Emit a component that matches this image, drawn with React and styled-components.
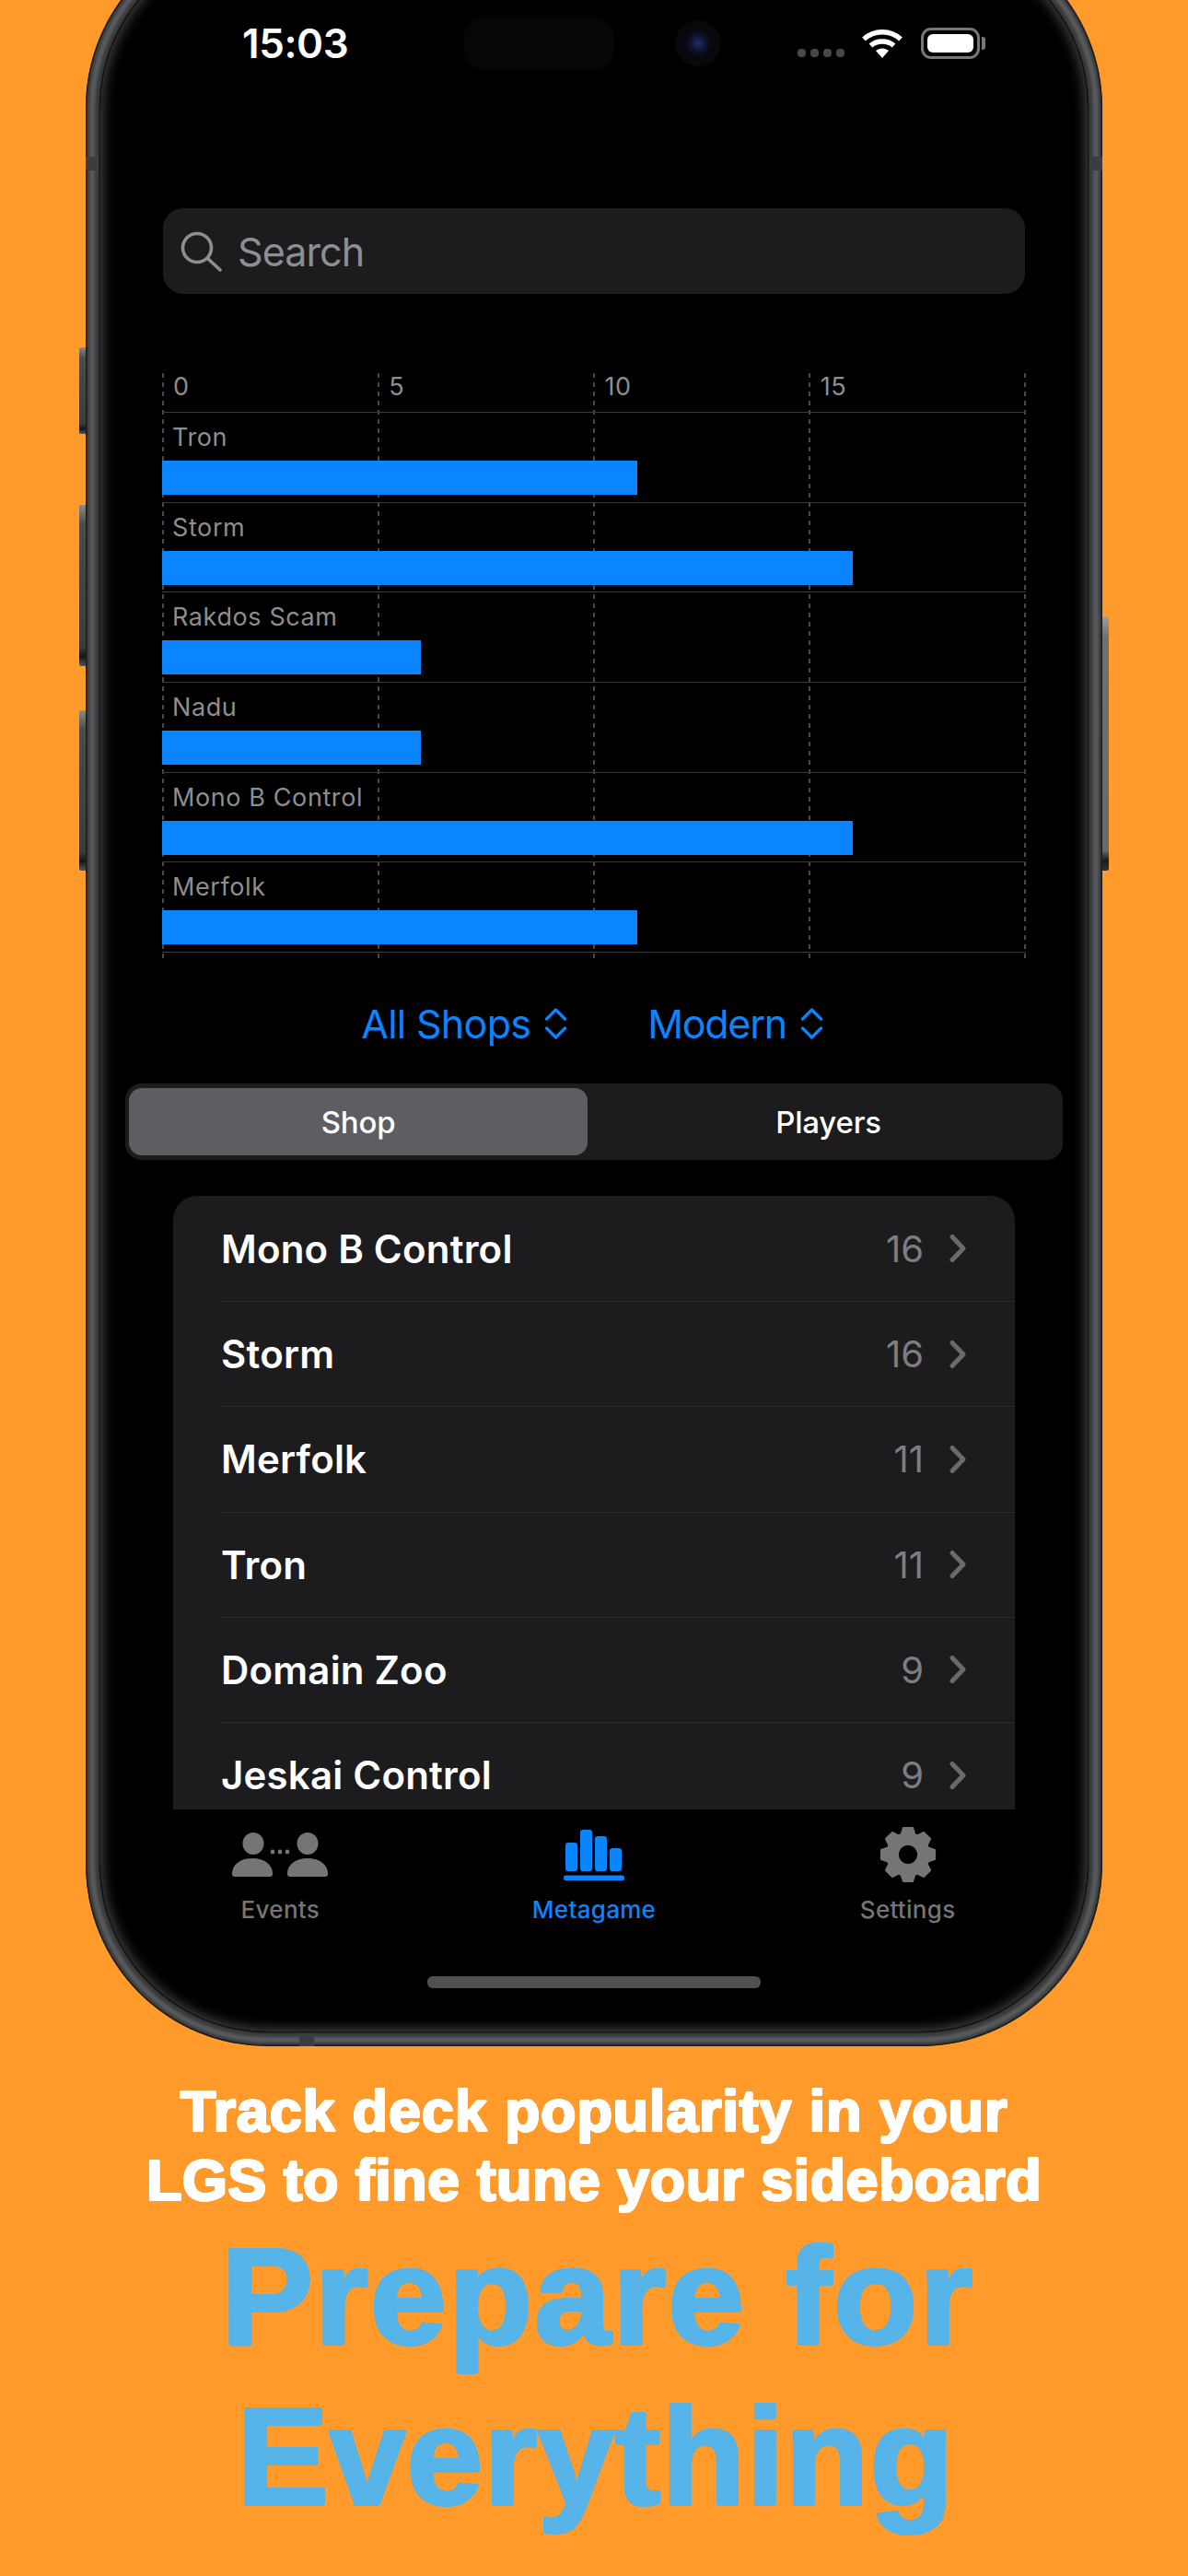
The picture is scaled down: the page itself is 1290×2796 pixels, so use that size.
import * as React from "react";
import styled, { createGlobalStyle } from "styled-components";

const GlobalStyle = createGlobalStyle`
  html, body {
    margin: 0;
    padding: 0;
    background: #ff9a2b;
  }
  * {
    box-sizing: border-box;
  }
`;

const UI_FONT = `Inter, "Liberation Sans", sans-serif`;
const BLUE = "#0a84ff";
const UNIT = 46.9;

const chartRows = [
  { name: "Tron", value: 11 },
  { name: "Storm", value: 16 },
  { name: "Rakdos Scam", value: 6 },
  { name: "Nadu", value: 6 },
  { name: "Mono B Control", value: 16 },
  { name: "Merfolk", value: 11 },
];

const listRows = [
  { name: "Mono B Control", count: 16 },
  { name: "Storm", count: 16 },
  { name: "Merfolk", count: 11 },
  { name: "Tron", count: 11 },
  { name: "Domain Zoo", count: 9 },
  { name: "Jeskai Control", count: 9 },
];

// 8 tooth gear outline, computed so the teeth stay even
const gearPath = () => {
  const cx = 32;
  const cy = 32;
  const pts = [];
  for (let i = 0; i < 8; i++) {
    const a = (i * Math.PI) / 4 - Math.PI / 2;
    [
      [-0.33, 23],
      [-0.17, 29.5],
      [0.17, 29.5],
      [0.33, 23],
    ].forEach(([d, r]) => {
      pts.push(`${(cx + r * Math.cos(a + d)).toFixed(2)} ${(cy + r * Math.sin(a + d)).toFixed(2)}`);
    });
  }
  return `M${pts.join("L")}Z M32 21a11 11 0 1 0 0.01 0Z`;
};

// fattens the glyphs with round corners, a text-stroke would leave them sharp
const roundOutline = (radius, color) => {
  const out = [];
  for (let i = 0; i < 16; i++) {
    const a = (i * Math.PI) / 8;
    out.push(`${(radius * Math.cos(a)).toFixed(2)}px ${(radius * Math.sin(a)).toFixed(2)}px 0 ${color}`);
  }
  return out.join(", ");
};

const App = () => {
  return (
    <Page>
      <GlobalStyle />
      <Phone>
        <ButtonLeft $top={458} $height={94} />
        <ButtonLeft $top={629} $height={175} />
        <ButtonLeft $top={852} $height={174} />
        <ButtonRight />
        <FrameShine />
        <BandLeft />
        <BandRight />
        <BandBottom />
        <Screen>
          <StatusBar>
            <Time>15:03</Time>
            <Island />
            <Camera />
            <SignalDots>
              <i />
              <i />
              <i />
              <i />
            </SignalDots>
            <WifiIcon />
            <Battery>
              <BatteryFill />
            </Battery>
          </StatusBar>

          <Content>
            <SearchBar>
              <SearchIcon />
              <SearchText>Search</SearchText>
            </SearchBar>

            <Chart>
              <GridLines>
                <GridLine />
                <GridLine />
                <GridLine />
                <GridLine />
                <GridLine />
              </GridLines>
              <AxisRow>
                <AxisLabel>0</AxisLabel>
                <AxisLabel>5</AxisLabel>
                <AxisLabel>10</AxisLabel>
                <AxisLabel>15</AxisLabel>
              </AxisRow>
              <ChartBody>
                {chartRows.map((row) => (
                  <ChartRow key={row.name}>
                    <ChartLabel>{row.name}</ChartLabel>
                    <Bar style={{ width: row.value * UNIT }} />
                  </ChartRow>
                ))}
              </ChartBody>
            </Chart>

            <Pickers>
              <Picker $spacing={-0.7}>
                All Shops
                <UpDownIcon />
              </Picker>
              <Picker $spacing={-1.3}>
                Modern
                <UpDownIcon />
              </Picker>
            </Pickers>

            <Segment>
              <SegmentItem $active>Shop</SegmentItem>
              <SegmentItem>Players</SegmentItem>
            </Segment>

            <List>
              {listRows.map((row) => (
                <ListRow key={row.name}>
                  <RowName>{row.name}</RowName>
                  <RowCount>{row.count}</RowCount>
                  <RowChevron />
                </ListRow>
              ))}
            </List>
          </Content>

          <TabBar>
            <Tab>
              <TabIcon>
                <EventsIcon />
              </TabIcon>
              Events
            </Tab>
            <Tab $active>
              <TabIcon>
                <MetagameIcon />
              </TabIcon>
              Metagame
            </Tab>
            <Tab>
              <TabIcon>
                <svg width="64" height="64" viewBox="0 0 64 64">
                  <path d={gearPath()} fill="#757575" stroke="#757575" strokeWidth="2" strokeLinejoin="round" fillRule="evenodd" />
                </svg>
              </TabIcon>
              Settings
            </Tab>
          </TabBar>
          <HomeBar />
        </Screen>
      </Phone>

      <Caption>
        <SubLine $spacing={0.8}>Track deck popularity in your</SubLine>
        <SubLine $spacing={0.42}>LGS to fine tune your sideboard</SubLine>
        <TitleBlock>
          <TitleLine $shift={8} $spacing={1.6}>
            Prepare for
          </TitleLine>
          <TitleLine $shift={3} $spacing={0.4}>
            Everything
          </TitleLine>
        </TitleBlock>
      </Caption>
    </Page>
  );
};

const WifiIcon = () => (
  <svg width="44" height="32" viewBox="0 0 44 32" style={{ flex: "none", marginLeft: 19 }}>
    <path d="M2 11.5C13 1 31 1 42 11.5" fill="none" stroke="#fff" strokeWidth="5.5" strokeLinecap="butt" />
    <path d="M9.5 18.5C16 12.5 28 12.5 34.5 18.5" fill="none" stroke="#fff" strokeWidth="5.5" />
    <path d="M15 24C19 20.5 25 20.5 29 24L22 32Z" fill="#fff" />
  </svg>
);

const SearchIcon = () => (
  <svg width="46" height="44" viewBox="0 0 46 44" fill="none" stroke="#8e8e93" strokeWidth="3.6" strokeLinecap="round">
    <circle cx="18" cy="18" r="15.5" />
    <path d="M29.5 29.5L43 42" />
  </svg>
);

const UpDownIcon = () => (
  <svg width="25" height="34" viewBox="0 0 25 34" fill="none" stroke={BLUE} strokeWidth="3.2" strokeLinecap="round" strokeLinejoin="round">
    <path d="M2.5 12L12.5 2L22.5 12" />
    <path d="M2.5 22L12.5 32L22.5 22" />
  </svg>
);

const RowChevron = () => (
  <svg width="20" height="32" viewBox="0 0 20 32" fill="none" stroke="#6a6a6d" strokeWidth="5" strokeLinecap="round" strokeLinejoin="round">
    <path d="M4 3.5L16 16L4 28.5" />
  </svg>
);

const EventsIcon = () => (
  <svg width="104" height="48" viewBox="0 0 104 48" fill="#757575">
    <ellipse cx="23" cy="12" rx="11.5" ry="12" />
    <path d="M0 45C0 34 10 28 22 28C34 28 44 34 44 45C44 47 43 48 41 48H3C1 48 0 47 0 45Z" />
    <ellipse cx="82" cy="12" rx="11.5" ry="12" />
    <path d="M60 45C60 34 70 28 82 28C94 28 104 34 104 45C104 47 103 48 101 48H63C61 48 60 47 60 45Z" />
    <circle cx="44" cy="21" r="2.4" />
    <circle cx="52" cy="21" r="2.4" />
    <circle cx="60" cy="21" r="2.4" />
  </svg>
);

const MetagameIcon = () => (
  <svg width="66" height="55" viewBox="0 0 66 55" fill={BLUE}>
    <rect x="2" y="14" width="13" height="31" rx="3" />
    <rect x="18" y="0" width="13" height="45" rx="3" />
    <rect x="34" y="7" width="13" height="38" rx="3" />
    <rect x="50" y="20" width="13" height="25" rx="3" />
    <rect x="0" y="49.5" width="66" height="5.5" rx="2.5" />
  </svg>
);

const Page = styled.div`
  width: 1290px;
  height: 2796px;
  overflow: hidden;
  background: #ff9a2b;
  display: flex;
  flex-direction: column;
  align-items: center;
`;

const Phone = styled.div`
  position: relative;
  flex: none;
  width: 1104px;
  height: 2302px;
  margin-top: -81px;
  padding: 16px;
  border-radius: 198px;
  background: #36383a;
  box-shadow: inset 0 0 0 1.5px #1c1c1c;
`;

const FrameShine = styled.div`
  position: absolute;
  inset: 5px;
  border-radius: 193px;
  border: 4px solid #6c6e6f;
  filter: blur(2px);
`;

const ButtonLeft = styled.div`
  position: absolute;
  left: -7px;
  top: ${(p) => p.$top}px;
  width: 7px;
  height: ${(p) => p.$height}px;
  border-radius: 2px 0 0 2px;
  background: linear-gradient(#8a8a8a 0, #4c4c4c 12%, #3c3c3c 88%, #161616 94%, #555 100%);
`;

const ButtonRight = styled.div`
  position: absolute;
  right: -7px;
  top: 750px;
  width: 7px;
  height: 276px;
  border-radius: 0 2px 2px 0;
  background: linear-gradient(#a0a0a0 0, #707070 8%, #6a6a6a 92%, #1c1c1c 96%, #333 100%);
`;

const BandLeft = styled.div`
  position: absolute;
  left: 0;
  top: 251px;
  width: 16px;
  height: 15px;
  background: #3b3d3e;
`;

const BandRight = styled(BandLeft)`
  left: auto;
  right: 0;
`;

const BandBottom = styled.div`
  position: absolute;
  left: 232px;
  bottom: 0;
  width: 16px;
  height: 16px;
  background: #3b3d3e;
`;

const Screen = styled.div`
  position: relative;
  height: 100%;
  padding-top: 65px;
  border-radius: 182px;
  background: #000;
  overflow: hidden;
  box-shadow: 0 0 0 1.5px #161616;
  display: flex;
  flex-direction: column;
  font-family: ${UI_FONT};

  &::after {
    content: "";
    position: absolute;
    inset: 0;
    border-radius: 182px;
    box-shadow: inset 0 0 14px 2px #4a4a4a;
    pointer-events: none;
  }
`;

const StatusBar = styled.div`
  flex: none;
  height: 94px;
  padding-left: 154px;
  display: flex;
  align-items: center;
`;

const Time = styled.div`
  flex: none;
  width: 114px;
  font-size: 44px;
  line-height: 1;
  font-weight: 600;
  letter-spacing: -0.4px;
  white-space: nowrap;
  color: #fff;
`;

const Island = styled.div`
  flex: none;
  width: 163px;
  height: 57px;
  margin-left: 127px;
  border-radius: 22px;
  background: #060606;
`;

const Camera = styled.div`
  flex: none;
  width: 50px;
  height: 50px;
  margin-left: 66px;
  border-radius: 50%;
  background: radial-gradient(circle, #1b2f6d 0, #0e1536 22%, #08080f 40%, #060608 100%);
`;

const SignalDots = styled.div`
  flex: none;
  width: 51px;
  margin: 21px 0 0 83px;
  display: flex;
  justify-content: space-between;

  i {
    width: 9px;
    height: 9px;
    border-radius: 4px;
    background: #484848;
  }
`;

const Battery = styled.div`
  position: relative;
  flex: none;
  width: 64px;
  height: 34px;
  margin-left: 20px;
  padding: 4px;
  border: 3px solid #777;
  border-radius: 11px;

  &::after {
    content: "";
    position: absolute;
    right: -9px;
    top: 7px;
    width: 4px;
    height: 14px;
    border-radius: 0 3px 3px 0;
    background: #777;
  }
`;

const BatteryFill = styled.div`
  width: 100%;
  height: 100%;
  border-radius: 6px;
  background: #fff;
`;

const Content = styled.div`
  flex: none;
  padding: 0 68px;
  display: flex;
  flex-direction: column;
`;

const SearchBar = styled.div`
  height: 93px;
  margin-top: 132px;
  padding-left: 19px;
  border-radius: 22px;
  background: #1c1c1e;
  display: flex;
  align-items: center;
  gap: 16px;
`;

const SearchText = styled.div`
  font-size: 43px;
  letter-spacing: -0.9px;
  color: #8e8e93;
`;

const Chart = styled.div`
  position: relative;
  height: 640px;
  margin: 86px -1px 0;
`;

const GridLines = styled.div`
  position: absolute;
  inset: 0;
  display: flex;
  justify-content: space-between;
`;

const GridLine = styled.div`
  width: 2px;
  height: 100%;
  background: repeating-linear-gradient(#48484a 0 5px, transparent 5px 10px);
`;

const AxisRow = styled.div`
  position: relative;
  height: 42px;
  display: flex;
`;

const AxisLabel = styled.div`
  width: 234.25px;
  padding-left: 12px;
  font-size: 27px;
  line-height: 30px;
  letter-spacing: 0.6px;
  color: #8e8e8e;
`;

const ChartBody = styled.div`
  position: relative;
  border-bottom: 1.5px solid #3a3a3c;
`;

const ChartRow = styled.div`
  height: 97.7px;
  padding-top: 12px;
  border-top: 1.5px solid #3a3a3c;
`;

const ChartLabel = styled.div`
  height: 40px;
  padding-left: 11px;
  font-size: 27px;
  line-height: 30px;
  letter-spacing: 0.6px;
  color: #8e8e8e;
`;

const Bar = styled.div`
  height: 37px;
  background: ${BLUE};
`;

const Pickers = styled.div`
  height: 50px;
  margin-top: 41px;
  padding-right: 4px;
  display: flex;
  justify-content: center;
  align-items: center;
  gap: 87px;
`;

const Picker = styled.div`
  display: flex;
  align-items: center;
  gap: 15px;
  font-size: 43px;
  line-height: 50px;
  letter-spacing: ${(p) => p.$spacing}px;
  color: ${BLUE};
`;

const Segment = styled.div`
  height: 83px;
  margin: 40px -41px 0;
  padding: 5px 4px;
  border-radius: 18px;
  background: #1c1c1e;
  display: grid;
  grid-template-columns: 498px 1fr;
`;

const SegmentItem = styled.div`
  padding-left: ${(p) => (p.$active ? 0 : 11)}px;
  border-radius: 14px;
  background: ${(p) => (p.$active ? "#5e5e62" : "transparent")};
  display: flex;
  align-items: center;
  justify-content: center;
  font-size: 33px;
  font-weight: 500;
  letter-spacing: -0.2px;
  color: #fff;
`;

const List = styled.div`
  height: 666px;
  margin: 39px 11px 0;
  border-radius: 26px 26px 0 0;
  background: #1c1c1e;
  overflow: hidden;
`;

const ListRow = styled.div`
  height: 114.2px;
  margin-left: 52px;
  padding-right: 52px;
  border-top: 1.5px solid #2c2c2e;
  display: flex;
  align-items: center;

  &:first-child {
    border-top: none;
  }
`;

const RowName = styled.div`
  flex: 1;
  font-size: 42px;
  font-weight: 600;
  letter-spacing: 0.2px;
  color: #fff;
`;

const RowCount = styled.div`
  margin-right: 27px;
  font-size: 40px;
  color: #7e7e82;
`;

const TabBar = styled.div`
  flex: none;
  margin: 0 25px;
  padding-top: 18px;
  display: grid;
  grid-template-columns: repeat(3, 1fr);
`;

const Tab = styled.div`
  display: flex;
  flex-direction: column;
  align-items: center;
  gap: 13px;
  font-size: 26px;
  line-height: 32px;
  font-weight: 500;
  letter-spacing: 0.3px;
  color: ${(p) => (p.$active ? BLUE : "#757575")};
`;

const TabIcon = styled.div`
  height: 62px;
  display: flex;
  align-items: center;
`;

const HomeBar = styled.div`
  flex: none;
  width: 362px;
  height: 13px;
  margin: 56px auto 0;
  border-radius: 6px;
  background: #505050;
`;

const Caption = styled.div`
  flex: none;
  width: 100%;
  padding-top: 32.7px;
  text-align: center;
  font-family: "Liberation Sans", Arial, sans-serif;
  font-weight: 700;
`;

const SubLine = styled.div`
  font-size: 63px;
  line-height: 75px;
  letter-spacing: ${(p) => p.$spacing}px;
  color: #fff;
  text-shadow: ${roundOutline(1.1, "#fff")};
`;

const TitleBlock = styled.div`
  margin-top: 1.3px;
`;

const TitleLine = styled.div`
  padding-left: ${(p) => p.$shift}px;
  font-size: 150px;
  line-height: 174px;
  letter-spacing: ${(p) => p.$spacing}px;
  color: #56b4e8;
  text-shadow: ${roundOutline(1.5, "#56b4e8")};
`;

export default App;
